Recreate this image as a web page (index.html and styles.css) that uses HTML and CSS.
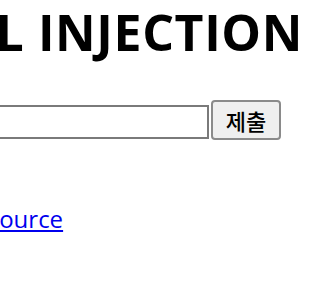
FILE: index.html
```html
<!DOCTYPE html>
<html lang="ko">
<head>
<meta charset="utf-8">
<title>SQL INJECTION</title>
<link rel="stylesheet" href="styles.css">
</head>
<body>
<div class="page">
  <h1 class="title">SQL INJECTION</h1>
  <form class="query-form">
    <input class="query-input" type="text" name="id">
    <button class="submit-btn" type="button">제출</button>
  </form>
  <p class="source-line"><a class="source-link" href="#">Source</a></p>
</div>
</body>
</html>
```
FILE: styles.css
```css
html, body {
  margin: 0;
  padding: 0;
  background: #ffffff;
  overflow: hidden;
}
body {
  font-family: "Open Sans", "Noto Sans CJK KR", sans-serif;
  color: #000000;
}
.page {
  padding-top: 7px;
  width: 300px;
  overflow: hidden;
}
.title {
  margin: 0 0 0 -73px;
  font-size: 50px;
  line-height: 50px;
  font-weight: 700;
  letter-spacing: 0.6px;
  white-space: nowrap;
}
.query-form {
  display: flex;
  align-items: flex-end;
  margin: 43px 0 0 -31px;
}
.query-input {
  box-sizing: border-box;
  width: 240px;
  height: 34px;
  margin: 0 0 1px 0;
  border: 2px solid #7a7a7a;
  background: #ffffff;
  padding: 0 4px;
  flex: none;
}
.submit-btn {
  box-sizing: border-box;
  width: 70px;
  height: 40px;
  margin-left: 2px;
  border: 2px solid #8a8a8a;
  border-radius: 4px;
  background: #efefef;
  font-family: "Noto Sans CJK KR", sans-serif;
  font-size: 22px;
  font-weight: 500;
  color: #000000;
  padding: 0;
  flex: none;
}
.source-line {
  margin: 63px 0 0 -14px;
  font-size: 24px;
  line-height: 32px;
}
.source-link {
  color: #0000ee;
  text-decoration: underline;
}
```
